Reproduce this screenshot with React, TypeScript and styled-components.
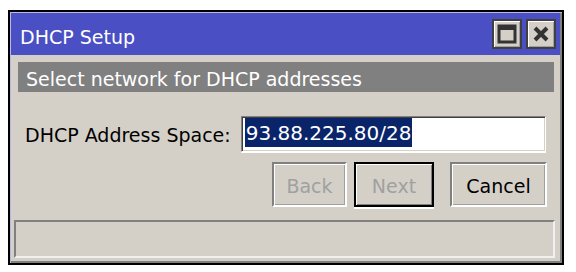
import React from "react";
import styled, { createGlobalStyle } from "styled-components";

const Global = createGlobalStyle`
  html, body { margin: 0; padding: 0; background: #ffffff; }
  body { font-family: "DejaVu Sans", Verdana, sans-serif; font-size: 19px; }
`;

const Page = styled.div`
  padding: 10px 0 0 8px;
  width: 576px;
  height: 272px;
  box-sizing: border-box;
`;

const Window = styled.div`
  width: 556px;
  height: 255px;
  box-sizing: border-box;
  border: 2px solid #000;
  display: flex;
  flex-direction: column;
  background: #d4d0c8;
  box-shadow: inset 1px 1px 0 #b8b8e0, inset -2px -2px 0 #808080;
  padding: 1px 2px 2px 1px;
`;

const TitleBar = styled.div`
  height: 42px;
  box-sizing: border-box;
  background: #4a50c4;
  display: flex;
  align-items: center;
  padding: 0 4px 0 9px;
  color: #fff;
`;

const Title = styled.div`
  flex: 1;
  padding-top: 5px;
`;

const TitleButtons = styled.div`
  display: flex;
  gap: 4px;
`;

const TitleButton = styled.div`
  width: 30px;
  height: 30px;
  box-sizing: border-box;
  border: 2px solid #404040;
  background: #d4d0c8;
  box-shadow: inset 1px 1px 0 #ffffff, inset -1px -1px 0 #a0a0a0;
  display: flex;
  align-items: center;
  justify-content: center;
`;

const Body = styled.div`
  flex: 1;
  display: flex;
  flex-direction: column;
  padding: 7px 6px 3px 7px;
`;

const Banner = styled.div`
  height: 30px;
  box-sizing: border-box;
  background: #808080;
  color: #fff;
  display: flex;
  align-items: center;
  padding: 4px 0 0 8px;
`;

const FieldRow = styled.div`
  display: flex;
  align-items: center;
  margin-top: 24px;
  padding: 0 8px 0 7px;
  gap: 10px;
`;

const Label = styled.div`
  color: #000;
  padding-top: 2px;
`;

const Input = styled.div`
  flex: 1;
  height: 36px;
  box-sizing: border-box;
  background: #fff;
  border-top: 1px solid #808080;
  border-left: 1px solid #808080;
  border-bottom: 1px solid #ffffff;
  border-right: 1px solid #ffffff;
  box-shadow: inset 1px 1px 0 #404040, inset -1px -1px 0 #d4d0c8, 0 1px 0 #fff;
  display: flex;
  align-items: flex-start;
  padding: 1px 0 0 3px;
`;

const Selected = styled.span`
  background: #0a246a;
  color: #fff;
  font-size: 20px;
  line-height: 29px;
  padding: 2px 1px 0;
  height: 29px;
  box-sizing: border-box;
  display: inline-flex;
  align-items: center;
`;

const ButtonRow = styled.div`
  display: flex;
  justify-content: flex-end;
  margin-top: 10px;
  padding-right: 7px;
`;

const Button = styled.div<{ $disabled?: boolean; $default?: boolean; $gap?: number }>`
  height: 45px;
  box-sizing: border-box;
  display: flex;
  align-items: center;
  justify-content: center;
  padding-top: 2px;
  margin-left: ${(p) => p.$gap ?? 0}px;
  color: ${(p) => (p.$disabled ? "#a0a0a0" : "#000")};
  border: 2px solid;
  border-color: ${(p) => (p.$default ? "#000" : "#808080 #ffffff #ffffff #808080")};
  box-shadow: ${(p) =>
    p.$default
      ? "inset 1px 1px 0 #fff, inset -1px -1px 0 #808080, 0 2px 0 #fff"
      : "inset 1px 1px 0 #fff, inset -1px -1px 0 #a0a0a0"};
`;

const Status = styled.div`
  margin: auto -1px 0 -4px;
  height: 38px;
  box-sizing: border-box;
  border-top: 2px solid #808080;
  border-left: 2px solid #808080;
  border-bottom: 2px solid #f0f0f0;
  border-right: 2px solid #f0f0f0;
`;

export default function App() {
  return (
    <>
      <Global />
      <Page>
        <Window>
          <TitleBar>
            <Title>DHCP Setup</Title>
            <TitleButtons>
              <TitleButton>
                <svg width="20" height="20" viewBox="0 0 20 20">
                  <rect x="2" y="2" width="16" height="16" fill="none" stroke="#333" strokeWidth="3" />
                  <rect x="2" y="2" width="16" height="4" fill="#333" />
                </svg>
              </TitleButton>
              <TitleButton>
                <svg width="20" height="20" viewBox="0 0 20 20">
                  <path d="M4 4 L16 16 M16 4 L4 16" stroke="#333" strokeWidth="4" />
                </svg>
              </TitleButton>
            </TitleButtons>
          </TitleBar>
          <Body>
            <Banner>Select network for DHCP addresses</Banner>
            <FieldRow>
              <Label>DHCP Address Space:</Label>
              <Input>
                <Selected>93.88.225.80/28</Selected>
              </Input>
            </FieldRow>
            <ButtonRow>
              <Button $disabled style={{ width: 75 }}>Back</Button>
              <Button $disabled $default $gap={7} style={{ width: 80 }}>Next</Button>
              <Button $gap={16} style={{ width: 97 }}>Cancel</Button>
            </ButtonRow>
            <Status />
          </Body>
        </Window>
      </Page>
    </>
  );
}
